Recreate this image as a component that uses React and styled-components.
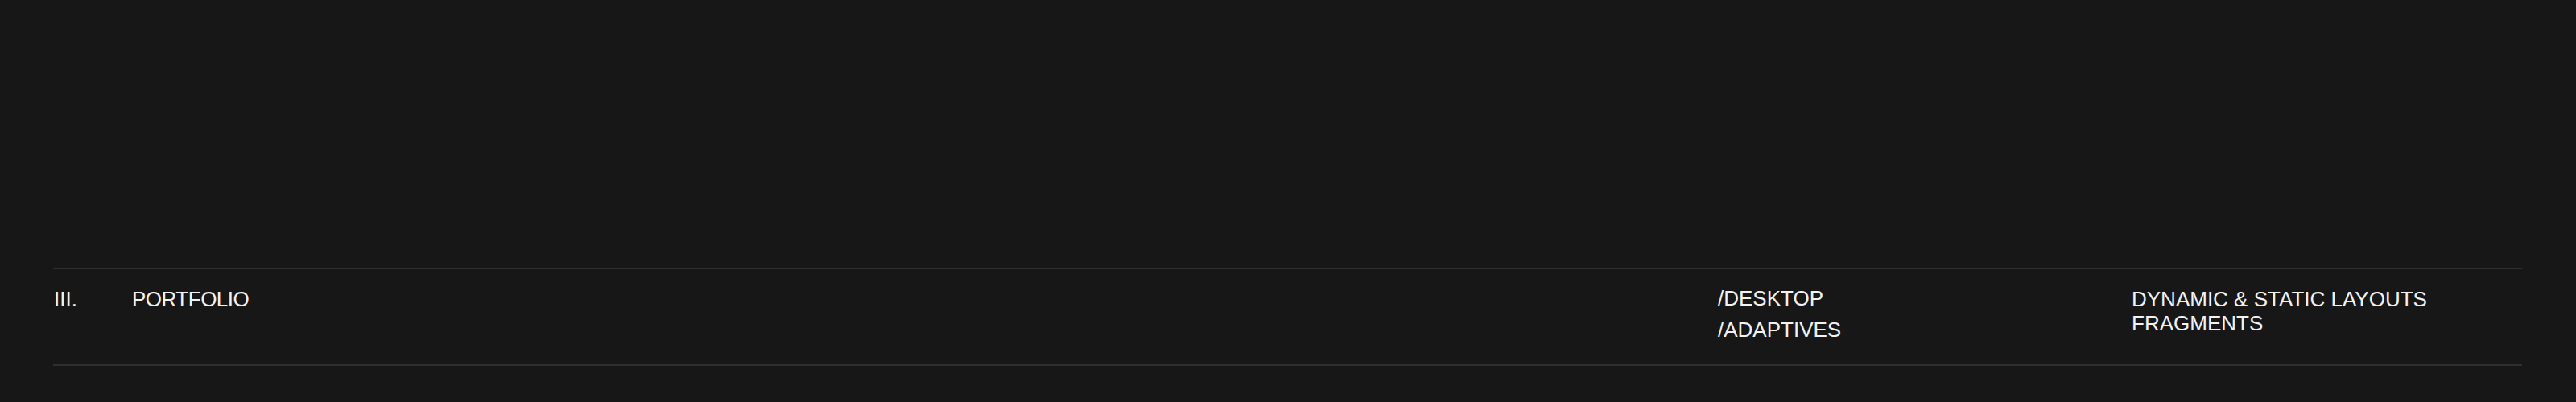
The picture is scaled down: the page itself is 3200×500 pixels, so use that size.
import React from "react";
import styled, { createGlobalStyle } from "styled-components";

const GlobalStyle = createGlobalStyle`
  html, body {
    margin: 0;
    padding: 0;
    background: #171717;
    color: #f2f2f2;
    font-family: "Liberation Sans", Arial, sans-serif;
  }
`;

const services = [
  {
    num: "III.",
    title: "PORTFOLIO",
    types: ["/DESKTOP", "/ADAPTIVES"],
    notes: ["DYNAMIC & STATIC LAYOUTS", "FRAGMENTS"],
  },
];

const App = () => {
  return (
    <>
      <GlobalStyle />
      <Section>
        {services.map((s) => (
          <Row key={s.num}>
            <Num>{s.num}</Num>
            <Title>{s.title}</Title>
            <List>
              {s.types.map((t) => (
                <li key={t}>{t}</li>
              ))}
            </List>
            <Notes>
              {s.notes.map((n) => (
                <div key={n}>{n}</div>
              ))}
            </Notes>
          </Row>
        ))}
      </Section>
    </>
  );
};
export default App;

const Section = styled.section`
  padding: 333px 67px 0 66px;
  height: 500px;
  box-sizing: border-box;
`;
const Row = styled.div`
  display: grid;
  grid-template-columns: 98px 1970px 514px 1fr;
  height: 122px;
  box-sizing: border-box;
  padding-top: 17px;
  border-top: 2px solid #2f2f2f;
  border-bottom: 2px solid #2f2f2f;
  font-size: 26px;
  line-height: 40px;
`;
const Num = styled.div`
  padding-left: 1px;
`;
const Title = styled.div`
  letter-spacing: -0.5px;
`;
const List = styled.ul`
  margin: 0;
  padding: 0;
  list-style: none;
  li {
    line-height: 39px;
  }
`;
const Notes = styled.div`
  margin-top: 5px;
  font-family: "Liberation Sans Narrow", "Liberation Sans", Arial, sans-serif;
  font-stretch: condensed;
  line-height: 30px;
`;
